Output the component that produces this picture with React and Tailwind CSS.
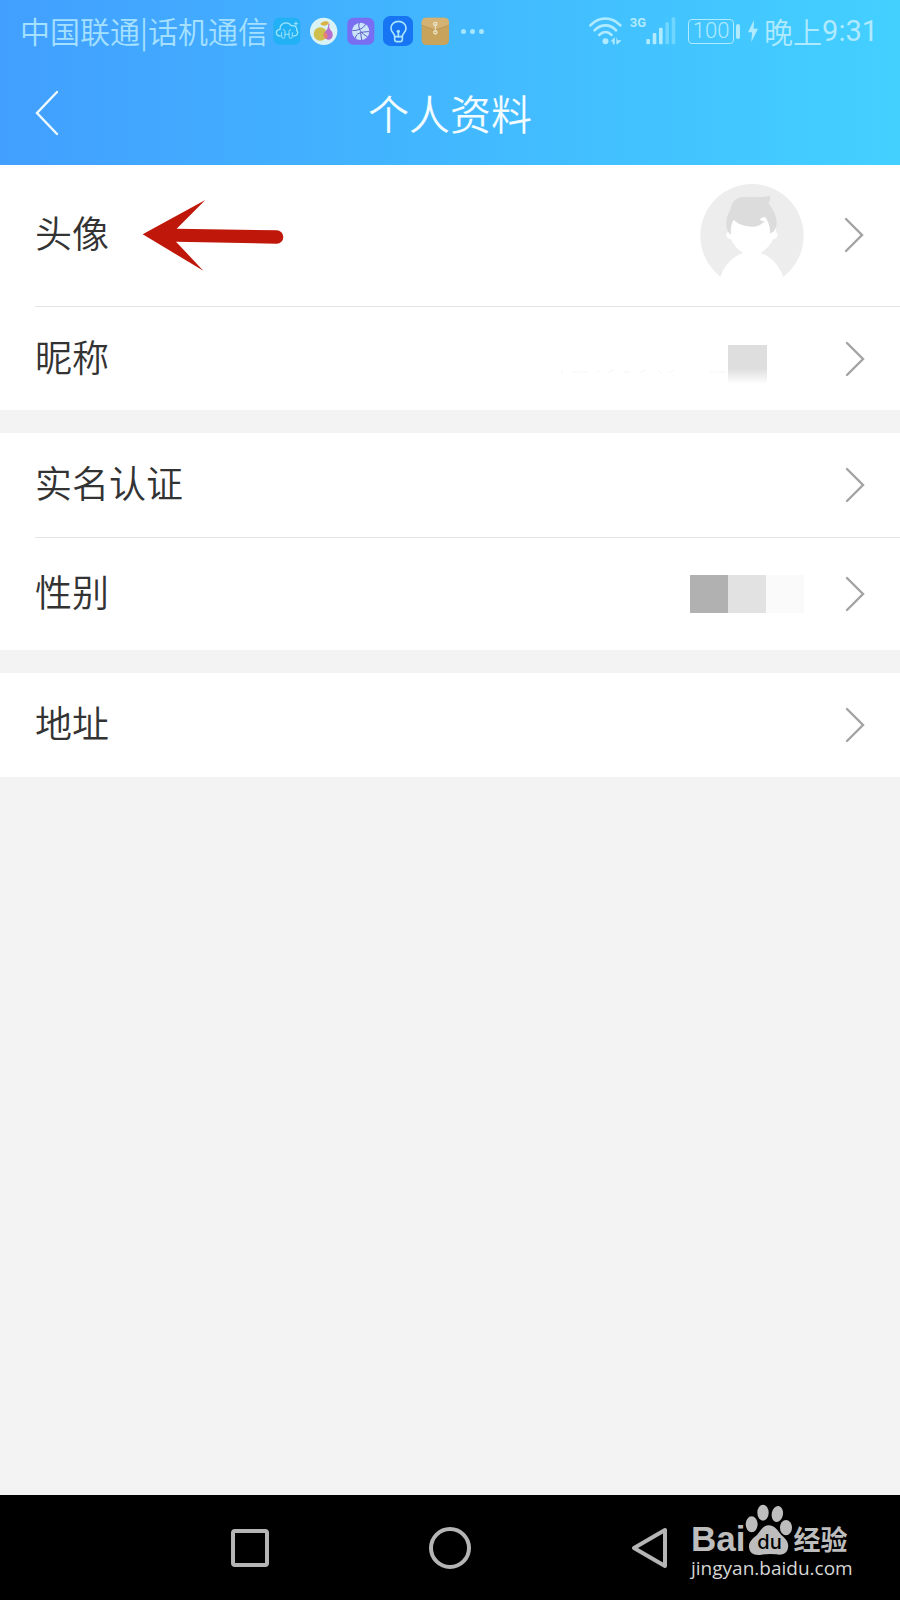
import { useState } from 'react';

const grupos = [
  [
    { id: 'avatar', label: '头像', size: 'h-[142px] pb-[2px] pr-9', gap: 'gap-10' },
    { id: 'nickname', label: '昵称', size: 'h-[103px] pr-[35px]', gap: 'gap-10' },
  ],
  [
    { id: 'realname', label: '实名认证', size: 'h-[105px] pr-[35px]', gap: 'gap-10' },
    { id: 'gender', label: '性别', size: 'h-[112px] pr-[35px]', gap: 'gap-10' },
  ],
  [{ id: 'address', label: '地址', size: 'h-[104px] pr-[35px]', gap: 'gap-10' }],
];

// Status bar app icons, all drawn on a 90x90 grid
function CloudIcon() {
  return (
    <svg viewBox="0 0 90 90" className="size-[30px]" fill="none" stroke="#9fe4fb" strokeWidth="4" strokeLinecap="round">
      <rect x="4" y="5" width="81" height="81" rx="18" fill="#22b1f5" stroke="none" />
      <path d="M25 60C10 60 9 42 24 40C24 19 48 15 58 29C70 27 76 35 74 43C81 50 76 60 65 60" />
      <path d="M29 50V61Q29 67 34 67Q39 67 39 61V46Q39 41 34 41M61 50V61Q61 67 56 67Q51 67 51 61V46Q51 41 56 41M39 55H51" strokeWidth="3" />
      <path d="M72 18V28M67 23H77" strokeWidth="3" />
    </svg>
  );
}

function FruitIcon() {
  return (
    <svg viewBox="0 0 90 90" className="size-[30px]">
      <circle cx="44" cy="46" r="41" fill="#d9f2f5" />
      <circle cx="34" cy="54" r="20" fill="#cfc04e" />
      <path d="M34 24C40 14 54 14 60 20C54 30 42 32 34 24Z" fill="#d8b244" />
      <path d="M62 23C58 36 64 40 68 46C75 58 70 71 59 71C45 71 40 56 48 48C54 42 58 36 58 23Z" fill="#b56fce" />
      <path d="M47 49C57 53 58 62 52 69C43 66 42 55 47 49Z" fill="#e8826f" />
    </svg>
  );
}

function GlobeIcon() {
  return (
    <svg viewBox="0 0 90 90" className="size-[30px]" fill="none">
      <rect x="4" y="5" width="81" height="81" rx="18" fill="#796df2" />
      <circle cx="44" cy="46" r="26" fill="#c9e4fb" />
      <path d="M40 21C34 37 46 53 64 62M19 44C33 44 54 38 58 25M29 66C28 53 44 47 70 47M44 51L47 72" stroke="#5c5ac4" strokeWidth="3" />
    </svg>
  );
}

function BulbIcon() {
  return (
    <svg viewBox="0 0 90 90" className="size-[30px]" fill="none" stroke="#a9e4ff" strokeWidth="5" strokeLinecap="round">
      <rect width="90" height="90" rx="22" fill="#1774f2" stroke="none" />
      <path d="M35 62C35 50 24 50 24 37C24 9 69 9 69 37C69 50 58 50 58 62Z" strokeLinejoin="round" />
      <path d="M35 64V71C35 79 58 79 58 71V64M46 62V47" />
      <circle cx="46" cy="46" r="5" fill="#a9e4ff" stroke="none" />
    </svg>
  );
}

function EnvelopeIcon() {
  return (
    <svg viewBox="0 0 90 90" className="size-[30px]" fill="none">
      <rect x="5" y="5" width="82" height="82" rx="14" fill="#c8a35b" />
      <path d="M5 28V19Q5 5 19 5H73Q87 5 87 19V28L52 40Q46 42 40 40Z" fill="#d3b274" />
      <path d="M6 28L40 40Q46 42 52 40L86 28" stroke="#af8e50" strokeWidth="2" />
      <path d="M46 24V48" stroke="#e9e3c8" strokeWidth="3" />
      <circle cx="46" cy="24" r="5" stroke="#e9e3c8" strokeWidth="4" />
      <circle cx="46" cy="49" r="5" stroke="#e9e3c8" strokeWidth="4" />
    </svg>
  );
}

function WifiIcon() {
  return (
    <svg viewBox="0 0 100 84" className="h-7 w-[33px]" fill="none" stroke="#b0eaff" strokeWidth="8" strokeLinecap="round">
      <path d="M4 25C30-3 69-3 95 25M17 40C36 20 64 20 82 40M31 54C43 42 57 42 68 54" />
      <circle cx="50" cy="73" r="9" fill="#b0eaff" stroke="none" />
      <path d="M65 74L78 60V82H72V74ZM83 60L87 70H99L86 82H83Z" fill="#b0eaff" stroke="none" />
    </svg>
  );
}

function SignalIcon() {
  return (
    <svg viewBox="0 0 90 84" className="h-7 w-[30px]">
      <g fill="#b0eaff">
        <rect x="1" y="66" width="11" height="16" rx="3" />
        <rect x="20" y="48" width="11" height="34" rx="3" />
        <rect x="39" y="32" width="11" height="50" rx="3" />
      </g>
      <g fill="#6fd6ff">
        <rect x="58" y="16" width="11" height="66" rx="3" />
        <rect x="77" y="1" width="11" height="81" rx="3" />
      </g>
    </svg>
  );
}

function StatusBar() {
  return (
    <div className="flex h-[62px] items-center justify-between pr-[22px] pl-5 text-[#a5e1ff]">
      <div className="flex items-center gap-1">
        <span className="pb-0.5 text-[30px] leading-none font-[350] whitespace-nowrap">中国联通|话机通信</span>
        <div className="flex items-center gap-[7px]">
          <CloudIcon />
          <FruitIcon />
          <GlobeIcon />
          <BulbIcon />
          <EnvelopeIcon />
          <div className="ml-1 flex gap-1">
            <i className="size-[5px] rounded-full bg-[#a5e6ff]" />
            <i className="size-[5px] rounded-full bg-[#a5e6ff]" />
            <i className="size-[5px] rounded-full bg-[#a5e6ff]" />
          </div>
        </div>
      </div>
      <div className="flex items-center text-[#b0eaff]">
        <WifiIcon />
        <div className="ml-2 flex h-7">
          <span className="font-[Roboto,sans-serif] text-[13px] leading-3 font-bold">3G</span>
          <SignalIcon />
        </div>
        <div className="ml-3 flex items-center gap-0.5">
          <span className="flex h-[25px] w-[46px] items-center justify-center rounded border border-[#b0eaff] font-[Roboto,sans-serif] text-[22px] leading-none font-light">
            100
          </span>
          <i className="h-[15px] w-1 rounded-full bg-[#b0eaff]" />
        </div>
        <svg viewBox="0 0 30 66" className="ml-2 h-[22px] w-[10px]" fill="#b0eaff">
          <path d="M18 0L0 37H12L10 66L30 26H17Z" />
        </svg>
        <span className="ml-[6px] flex items-center text-[29px] leading-none font-[350] whitespace-nowrap">
          晚上<span className="font-[Roboto,sans-serif] font-normal">9:31</span>
        </span>
      </div>
    </div>
  );
}

function Chevron() {
  return (
    <svg viewBox="0 0 20 36" className="h-9 w-5 shrink-0" fill="none" stroke="#a3a3a3" strokeWidth="2.4" strokeLinecap="round">
      <path d="M2 2L18 18L2 34" />
    </svg>
  );
}

function RedArrow() {
  return (
    <svg viewBox="0 0 426 216" className="ml-[33px] h-[72px] w-[142px]" fill="#bf180b">
      <path d="M2 106L190 3L104 89L404 94A20 20 0 0 1 404 134L102 128L184 215Z" />
    </svg>
  );
}

function Avatar() {
  return (
    <svg viewBox="0 0 312 312" className="size-[104px]">
      <circle cx="156" cy="158" r="155" fill="#ededed" />
      <path d="M62 312V280C73 244 101 219 130 210C113 200 101 187 93 169C78 168 74 151 84 148C82 120 95 90 120 80H200C225 95 232 120 227 147C237 150 233 168 219 169C211 187 199 200 181 210C211 219 238 246 249 280V312Z" fill="#fff" />
      <path d="M91 154C77 145 73 105 90 83C95 60 105 44 128 42H185Q203 42 209 37C212 47 209 56 205 61C227 86 239 123 222 145L209 152C212 135 206 116 195 102C190 102 182 105 180 110C184 114 190 115 195 113C183 126 171 132 156 131C134 130 111 122 101 110C93 125 91 140 93 154Z" fill="#dcdcdc" />
    </svg>
  );
}

// Right-hand value of each row; private values are shown as pixelated blocks
function RowValue({ id }) {
  if (id === 'avatar') return <Avatar />;
  if (id === 'nickname') {
    return (
      <div className="mt-3 mr-[38px] flex items-center">
        <svg viewBox="0 0 168 38" className="h-[38px] w-[168px]" fill="none" stroke="#f6f6f6" strokeWidth="1">
          <path d="M2 24V28M12 26H28M36 27L40 24M48 26L54 24M64 26H70M80 27L86 24M98 24L102 28M108 27L114 24M150 26H166" />
        </svg>
        <span className="size-[39px] bg-linear-to-b from-[#dedede] from-60% to-white" />
      </div>
    );
  }
  if (id === 'gender') {
    return (
      <div className="mr-px flex items-center">
        <span className="size-[38px] bg-[#b1b1b1]" />
        <span className="size-[38px] bg-[#e2e2e2]" />
        <span className="size-[38px] bg-[#fafafa]" />
      </div>
    );
  }
  return null;
}

function Row({ item, last, onSelect }) {
  return (
    <li className="pl-[35px]">
      <button
        type="button"
        onClick={() => onSelect(item.id)}
        className={`flex w-full items-center text-left ${item.size} ${last ? '' : 'border-b border-[#e4e4e4]'}`}
      >
        <span className="pb-[5px] text-[37px] leading-none font-[350] text-[#333]">{item.label}</span>
        {item.id === 'avatar' && <RedArrow />}
        <span className={`ml-auto flex items-center ${item.gap}`}>
          <RowValue id={item.id} />
          <Chevron />
        </span>
      </button>
    </li>
  );
}

function Watermark() {
  return (
    <div className="absolute top-[9px] right-[49px] flex w-[160px] flex-col text-[#bdbdbd]">
      <div className="flex h-[52px] items-end">
        <span className="font-['Liberation_Sans',sans-serif] text-[35px] leading-[34px] font-bold">Bai</span>
        <div className="relative h-[52px] w-[48px] shrink-0">
          <svg viewBox="0 0 144 156" className="h-[52px] w-[48px]" fill="#bdbdbd">
            <ellipse cx="20" cy="61" rx="18" ry="24" />
            <ellipse cx="54" cy="26" rx="17" ry="24" />
            <ellipse cx="97" cy="30" rx="17" ry="24" transform="rotate(10 97 30)" />
            <ellipse cx="123" cy="71" rx="18" ry="23" />
            <path d="M71 64C90 64 98 81 109 93C124 106 132 116 129 132C126 148 112 155 94 151Q72 148 50 152C28 156 13 148 12 129C11 113 23 104 36 93C47 80 53 64 71 64Z" />
          </svg>
          <span className="absolute inset-x-0 bottom-0.5 text-center font-[Inter,sans-serif] text-[20px] leading-6 font-medium text-black">du</span>
        </div>
        <span className="text-[27px] leading-[34px] font-bold whitespace-nowrap">经验</span>
      </div>
      <a href="#jingyan" className="font-['Open_Sans',sans-serif] text-[19px] leading-6 text-[#d6d6d6]">jingyan.baidu.com</a>
    </div>
  );
}

export default function App() {
  const [, setSelected] = useState(null);

  return (
    <div className="flex min-h-screen flex-col bg-[#f3f3f3] font-['Noto_Sans_CJK_SC',sans-serif]">
      <header className="bg-linear-to-r from-[#429fff] to-[#43d0ff]">
        <StatusBar />
        <div className="grid h-[103px] grid-cols-[1fr_auto_1fr] items-center px-[34px] pb-0.5">
          <button type="button" aria-label="返回" className="justify-self-start">
            <svg viewBox="0 0 26 46" className="h-[46px] w-[26px]" fill="none" stroke="#effaff" strokeWidth="2.4" strokeLinecap="round">
              <path d="M23 2L3 23L23 44" />
            </svg>
          </button>
          <h1 className="text-[41px] leading-none font-[350] text-[#f2fcff]">个人资料</h1>
        </div>
      </header>

      <main className="flex flex-1 flex-col gap-[23px]">
        {grupos.map((rows) => (
          <ul key={rows[0].id} className="bg-white">
            {rows.map((item, i) => (
              <Row key={item.id} item={item} last={i === rows.length - 1} onSelect={setSelected} />
            ))}
          </ul>
        ))}
      </main>

      <nav className="relative flex h-[105px] justify-center bg-black">
        <div className="grid w-2/3 grid-cols-3 place-items-center">
          <button type="button" aria-label="最近任务">
            <svg viewBox="0 0 42 42" className="size-[42px]" fill="none" stroke="#b5b5b5" strokeWidth="4">
              <rect x="4" y="4" width="34" height="34" rx="2" />
            </svg>
          </button>
          <button type="button" aria-label="主页">
            <svg viewBox="0 0 42 42" className="size-[42px]" fill="none" stroke="#b5b5b5" strokeWidth="4">
              <circle cx="21" cy="21" r="19" />
            </svg>
          </button>
          <button type="button" aria-label="后退">
            <svg viewBox="0 0 42 42" className="size-[42px]" fill="none" stroke="#b5b5b5" strokeWidth="4" strokeLinejoin="round">
              <path d="M5 21L36 3V39Z" />
            </svg>
          </button>
        </div>
        <Watermark />
      </nav>
    </div>
  );
}
